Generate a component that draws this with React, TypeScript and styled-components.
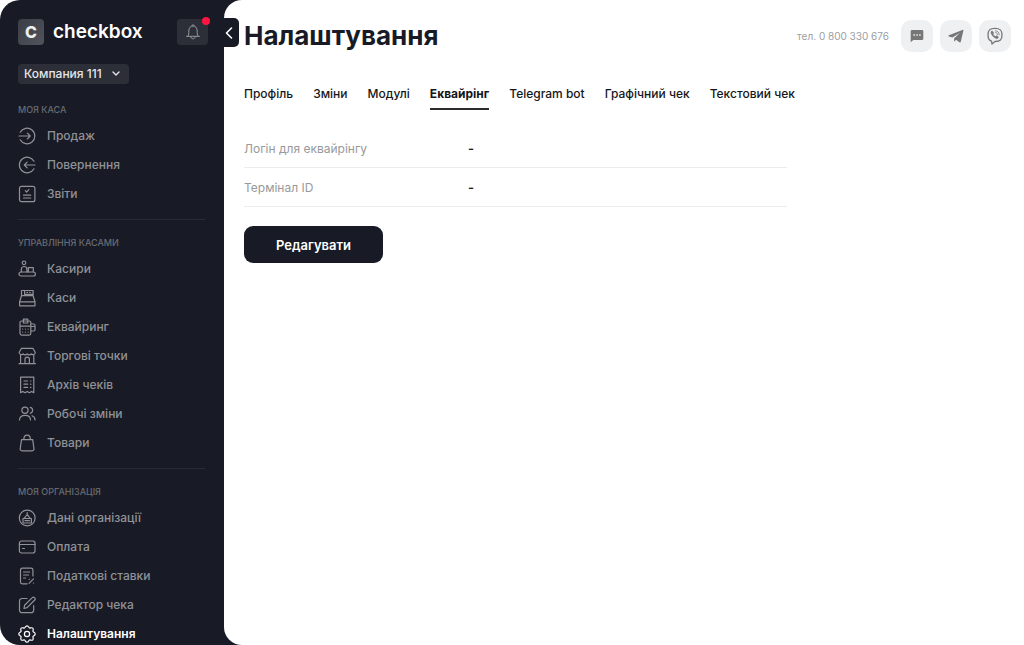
import React from 'react';
import styled, { createGlobalStyle, css } from 'styled-components';

const colors = {
  ink: '#181b25',
  chip: '#2c2f38',
  muted: '#919297',
  label: '#686b73',
};

const GlobalStyle = createGlobalStyle`
  *, *::before, *::after { box-sizing: border-box; }
  body {
    margin: 0;
    background: #fff;
    color: ${colors.ink};
    font-family: Inter, "Liberation Sans", sans-serif;
    font-size: 13px;
  }
  h1, dl, dd, ul { margin: 0; padding: 0; }
  ul { list-style: none; }
  button, select { font: inherit; }
  a { color: inherit; text-decoration: none; }
`;

const Layout = styled.div`
  position: relative;
  display: flex;
  height: 100vh;
  overflow: hidden;
  background: ${colors.ink};
  border-radius: 20px 0 0 20px;
`;

const Sidebar = styled.aside`
  flex: 0 0 224px;
  padding: 19px 19px 0 18px;
  overflow: hidden;
  color: ${colors.muted};
`;

const Brand = styled.div`
  display: flex;
  align-items: center;
  height: 26px;
`;

const BrandLink = styled.a`
  display: flex;
  align-items: center;
  gap: 9px;
  color: #fff;
  font-size: 19px;
  font-weight: 600;
  line-height: 26px;
`;

const BrandMark = styled.span`
  width: 26px;
  height: 26px;
  border-radius: 4px;
  background: linear-gradient(135deg, #3a3d46, #52545c);
  color: #eee;
  font-size: 16px;
  font-weight: 800;
  line-height: 26px;
  text-align: center;
`;

const BellButton = styled.button`
  position: relative;
  display: grid;
  place-items: center;
  width: 31px;
  height: 26px;
  margin-left: auto;
  margin-right: -3px;
  padding: 0;
  border: 0;
  border-radius: 4px;
  background: ${colors.chip};
  color: #96979c;
`;

const Dot = styled.span`
  position: absolute;
  top: -2px;
  right: -2px;
  width: 8px;
  height: 8px;
  border-radius: 50%;
  background: #fb1540;
`;

const CompanyPicker = styled.div`
  position: relative;
  width: 111px;
  height: 20px;
  margin: 19px 0 3px;
  color: #e6e6e8;

  svg {
    position: absolute;
    top: 7px;
    right: 9px;
    pointer-events: none;
  }
`;

const CompanySelect = styled.select`
  display: block;
  width: 100%;
  height: 20px;
  padding: 0 20px 0 6px;
  border: 0;
  border-radius: 4px;
  appearance: none;
  background: ${colors.chip};
  color: inherit;
  font-size: 12px;
  font-weight: 500;
  line-height: 20px;
`;

const Section = styled.section`
  padding: 16px 0 11px;
  border-bottom: 1px solid #282b36;
`;

const SectionLabel = styled.h2`
  margin: 0 0 4px;
  color: ${colors.label};
  font-size: 9px;
  font-weight: 500;
  line-height: 14px;
  text-transform: uppercase;
`;

const NavLink = styled.a<{ $active?: boolean }>`
  display: flex;
  align-items: center;
  gap: 11px;
  height: 29px;
  font-size: 12px;
  font-weight: 500;
  white-space: nowrap;
  ${(p) => p.$active && css`
    color: #fff;
    font-weight: 600;
  `}
`;

const Glyph = styled.svg`
  flex: none;
  display: block;
  fill: none;
  stroke: currentColor;
  stroke-linecap: round;
  stroke-linejoin: round;
`;

const CollapseButton = styled.button`
  position: absolute;
  z-index: 1;
  top: 18px;
  left: 223px;
  display: flex;
  align-items: center;
  width: 16px;
  height: 29px;
  padding: 0 0 0 2px;
  border: 0;
  border-radius: 0 5px 5px 0;
  background: ${colors.ink};
  color: #fff;
`;

const Main = styled.main`
  flex: 1;
  min-width: 0;
  padding: 19px 13px 24px 20px;
  border-radius: 18px 0 0 18px;
  background: #fff;
`;

const Header = styled.header`
  display: flex;
  align-items: center;
  justify-content: space-between;
  height: 33px;
`;

const Title = styled.h1`
  font-size: 26px;
  font-weight: 700;
  line-height: 34px;
`;

const Contacts = styled.div`
  display: flex;
  align-items: center;
  gap: 7px;
`;

const Phone = styled.a`
  margin-right: 5px;
  color: #9c9da1;
  font-size: 10px;
`;

const ContactLink = styled.a`
  display: grid;
  place-items: center;
  width: 32px;
  height: 32px;
  border-radius: 10px;
  background: #eff0f2;
  color: #777;
`;

const Tabs = styled.nav`
  display: flex;
  gap: 20px;
  margin-top: 33px;
`;

const Tab = styled.a<{ $active?: boolean }>`
  padding-bottom: 5px;
  border-bottom: 2px solid ${(p) => (p.$active ? '#2b2b2e' : 'transparent')};
  color: #151619;
  font-size: 12px;
  font-weight: ${(p) => (p.$active ? 700 : 500)};
  line-height: 18px;
  white-space: nowrap;
`;

const Details = styled.dl`
  max-width: 543px;
  margin-top: 19px;
`;

const DetailRow = styled.div`
  display: flex;
  align-items: center;
  height: 39px;
  border-bottom: 1px solid #ececed;
`;

const DetailName = styled.dt`
  flex: 0 0 224px;
  color: #98999d;
  font-size: 12px;
`;

const DetailValue = styled.dd`
  font-weight: 600;
`;

const PrimaryButton = styled.button`
  height: 37px;
  margin-top: 19px;
  padding: 0 32px;
  border: 0;
  border-radius: 9px;
  background: ${colors.ink};
  color: #fff;
  font-size: 13px;
  font-weight: 600;
`;

const icons: Record<string, React.ReactNode> = {
  sale: <path d="M2.2 5.2a7.800 7.800 0 1 1 0 7.600M1 9h11.200M9.400 6.200 12.200 9l-2.800 2.800" />,
  refund: <path d="M16 5.200a7.800 7.800 0 1 0 0 7.600M17 9H6.300M9.100 6.200 6.300 9l2.800 2.800" />,
  report: <><rect x="1.500" y="1.300" width="15.400" height="15.400" rx="2" /><path d="M7.300 5.700l1.300 1.300 2.300-2.400M5.500 10.200h7.200M5.500 13h7.200" /></>,
  cashier: <><circle cx="6" cy="2.800" r="1.800" /><path d="M3.300 12V9.300a2.800 2.800 0 0 1 5.600 0V12M10.300 12V7.600h5V12" /><rect x="1" y="12" width="16.400" height="4" rx="2" /></>,
  register: <><path d="M3.500 6.700V1.500h11.600v5.200M3.500 6.700h11.600l1.900 6.100H1.600zM1.600 12.800H17v4H1.600zM6.600 1.500v3.800h8.500" /><path d="M9 3.400h.5M11.700 3.400h.5" /></>,
  terminal: <><path d="M5.400 3V1.100h4.400V3M3.500 3h7.800a1.500 1.500 0 0 1 1.500 1.500v10.800a1.800 1.800 0 0 1-1.800 1.800H3.800A1.800 1.800 0 0 1 2 15.300V4.500A1.500 1.500 0 0 1 3.500 3zM2 8.200h10.800M5.400 3v2h4.400V3M12.800 6h2.700a1.500 1.500 0 0 1 1.500 1.500v4a1.500 1.500 0 0 1-1.500 1.500h-2.700M12.800 8.500H17" /><path d="M4.700 11v.1M7.400 11v.1M10.100 11v.1M4.700 14v.1M7.400 14v.1M10.100 14v.1" /></>,
  store: <path d="M3.500 1.300h11.400l2.400 4.200a2.400 2.400 0 0 1-4 1.500 2.700 2.700 0 0 1-4.100 0 2.700 2.700 0 0 1-4.100 0 2.400 2.400 0 0 1-4-1.500zM2.600 8v8.500M15.800 8v8.500M1 16.600h16.400M7 16.500v-4.200a2.200 2.200 0 0 1 4.400 0v4.200" />,
  archive: <><path d="M2.600 1.200h13.200v15.500l-2.200-1.300-2.200 1.300-2.200-1.300L7 16.700l-2.200-1.300-2.200 1.300z" /><path d="M6 5h3.600M6 8.200h3.600M6 11.400h3.600M12.500 5h.4M12.500 8.200h.4M12.500 11.400h.4" /></>,
  people: <><circle cx="7" cy="5.300" r="3.100" /><path d="M1.500 15c0-3 2.300-4.700 5.500-4.700s5.500 1.700 5.500 4.700M12.300 2.300a3.100 3.100 0 0 1 0 6M14 10.800c1.900.6 3 2 3 4.200" /></>,
  bag: <path d="M3.500 5.600h11.200l1.300 9.200a1.800 1.800 0 0 1-1.800 2H4a1.800 1.800 0 0 1-1.800-2zM5.800 5.500C5.800 2.900 7.100 1.200 9.100 1.200s3.300 1.700 3.300 4.300" />,
  company: <><circle cx="9.200" cy="9" r="7.900" /><path d="M5 14V9.500h8.400V14zM6.200 9.300 9.200 5.500l3 3.800M9.200 5.300V3.500M7 11.700h4.400" /></>,
  card: <><rect x="1.400" y="3" width="15.600" height="12" rx="2.200" /><path d="M1.400 6.500H17M4.500 10.500h2" /></>,
  tax: <><path d="M9 16.800H4.300a1.800 1.800 0 0 1-1.800-1.800V3a1.800 1.800 0 0 1 1.800-1.800h8.800A1.800 1.800 0 0 1 14.900 3v6M5.600 5h6M5.600 8h5M5.600 11h2" /><path d="M11 16.300l4.500-4.500M11.200 12.300h.2M15.400 16h.2" /></>,
  edit: <path d="M9 2.500H4a2.500 2.500 0 0 0-2.500 2.500v9.200A2.500 2.500 0 0 0 4 16.700h9.200a2.500 2.500 0 0 0 2.500-2.500V9.500M6 12.500l.6-3.300 7.700-7.600a1.500 1.500 0 0 1 2.100 0l.3.300a1.500 1.500 0 0 1 0 2.100l-7.600 7.700z" />,
  settings: <><circle cx="9" cy="9" r="2.600" /><path d="M9 .8C10.700.8 10.500 2.600 11.500 3S13.600 2 14.800 3.200 14.600 5.500 15 6.500s2.200.8 2.200 2.500-1.800 1.500-2.200 2.500 1 2.100-.2 3.300-2.300-.2-3.300.2-.8 2.200-2.500 2.200-1.500-1.800-2.500-2.200-2.100 1-3.300-.2.200-2.300-.2-3.300S.8 10.700.8 9 2.600 7.500 3 6.500 2 4.400 3.200 3.200s2.300.2 3.300-.2S7.300.8 9 .8z" /></>,
};

const sections = [
  { title: 'Моя каса', items: [['sale', 'Продаж'], ['refund', 'Повернення'], ['report', 'Звіти']] },
  {
    title: 'Управління касами',
    items: [
      ['cashier', 'Касири'], ['register', 'Каси'], ['terminal', 'Еквайринг'], ['store', 'Торгові точки'],
      ['archive', 'Архів чеків'], ['people', 'Робочі зміни'], ['bag', 'Товари'],
    ],
  },
  {
    title: 'Моя організація',
    items: [
      ['company', 'Дані організації'], ['card', 'Оплата'], ['tax', 'Податкові ставки'],
      ['edit', 'Редактор чека'], ['settings', 'Налаштування'],
    ],
  },
];

const tabs = ['Профіль', 'Зміни', 'Модулі', 'Еквайрінг', 'Telegram bot', 'Графічний чек', 'Текстовий чек'];

export default function App() {
  return (
    <Layout>
      <GlobalStyle />
      <Sidebar>
        <Brand>
          <BrandLink href="#home"><BrandMark>C</BrandMark>checkbox</BrandLink>
          <BellButton aria-label="Сповіщення">
            <Glyph width="16" height="18" viewBox="0 0 16 18">
              <path d="M1.500 13.300h13M3 13.300c.8-1.500.8-3 .8-5.300 0-3 1.600-5 4.200-5s4.200 2 4.200 5c0 2.300 0 3.800.8 5.300M7 2.800c0-1.700 2-1.700 2 0M5.700 13.500c0 3.200 4.600 3.200 4.600 0" />
            </Glyph>
            <Dot />
          </BellButton>
        </Brand>
        <CompanyPicker>
          <CompanySelect aria-label="Компанія"><option>Компания 111</option></CompanySelect>
          <Glyph width="8" height="6" viewBox="0 0 8 6" strokeWidth="1.400"><path d="M1 1l3 3 3-3" /></Glyph>
        </CompanyPicker>
        <nav>
          {sections.map((section) => (
            <Section key={section.title}>
              <SectionLabel>{section.title}</SectionLabel>
              <ul>
                {section.items.map(([icon, name]) => (
                  <li key={icon}>
                    <NavLink href={`#${icon}`} $active={icon === 'settings'}>
                      <Glyph width="18" height="18" viewBox="0 0 18 18" strokeWidth="1.200">{icons[icon]}</Glyph>
                      {name}
                    </NavLink>
                  </li>
                ))}
              </ul>
            </Section>
          ))}
        </nav>
      </Sidebar>
      <CollapseButton aria-label="Згорнути меню">
        <Glyph width="8" height="14" viewBox="0 0 8 14" strokeWidth="1.600"><path d="M6.500 2l-5 5 5 5" /></Glyph>
      </CollapseButton>
      <Main>
        <Header>
          <Title>Налаштування</Title>
          <Contacts>
            <Phone href="tel:0800330676">тел. 0 800 330 676</Phone>
            <ContactLink href="#chat" aria-label="Чат">
              <svg width="14" height="14" viewBox="0 0 14 14" fill="currentColor">
                <path fillRule="evenodd" d="M2 1h10a1.300 1.300 0 0 1 1.300 1.300v7.400A1.300 1.300 0 0 1 12 11H3.300L.7 13.300v-11A1.300 1.300 0 0 1 2 1zM3.400 5.200v1.500h1.500V5.200zM6.300 5.200v1.500h1.500V5.200zM9.200 5.200v1.500h1.500V5.200z" />
              </svg>
            </ContactLink>
            <ContactLink href="#telegram" aria-label="Telegram">
              <svg width="16" height="16" viewBox="0 0 16 16" fill="currentColor">
                <path d="M15 1.800.9 7.300c-.7.300-.7.900 0 1.100l3.500 1.100 7.700-4.800-5.900 5.500-.2 3.500 2-1.900 3.500 2.500c.6.400 1.100.1 1.300-.6L15.400 2.500c.1-.6-.1-.8-.4-.7z" />
              </svg>
            </ContactLink>
            <ContactLink href="#viber" aria-label="Viber">
              <Glyph width="16" height="18" viewBox="0 0 16 18" strokeWidth="1.300">
                <path d="M4.500 14.100C1.500 13.300 1 11 1 8c0-4.800 1.700-6.600 7-6.600S15 3.200 15 8s-1.700 6.500-7 6.500L5 17z" />
                <path fill="currentColor" strokeWidth=".5" d="M4.700 4.200c.8-.5 1.300.5 1.800 1.300.3.800-.5 1-.5 1.500.3 1.200 1.200 2 2.300 2.500.6.100.8-.9 1.500-.7.700.4 2 1 1.600 1.800-.6 1-1.300 1.400-2.200 1C6.500 10.300 4.800 8.300 4 6c-.2-.8.100-1.400.7-1.800z" />
                <path strokeWidth=".8" d="M8.300 3.800c2.500.1 3.900 1.500 3.900 4M8.600 5.600c1.200.1 1.900.8 1.900 2" />
              </Glyph>
            </ContactLink>
          </Contacts>
        </Header>
        <Tabs>
          {tabs.map((tab) => (
            <Tab key={tab} href="#tab" $active={tab === 'Еквайрінг'}>{tab}</Tab>
          ))}
        </Tabs>
        <Details>
          <DetailRow><DetailName>Логін для еквайрінгу</DetailName><DetailValue>-</DetailValue></DetailRow>
          <DetailRow><DetailName>Термінал ID</DetailName><DetailValue>-</DetailValue></DetailRow>
        </Details>
        <PrimaryButton>Редагувати</PrimaryButton>
      </Main>
    </Layout>
  );
}
